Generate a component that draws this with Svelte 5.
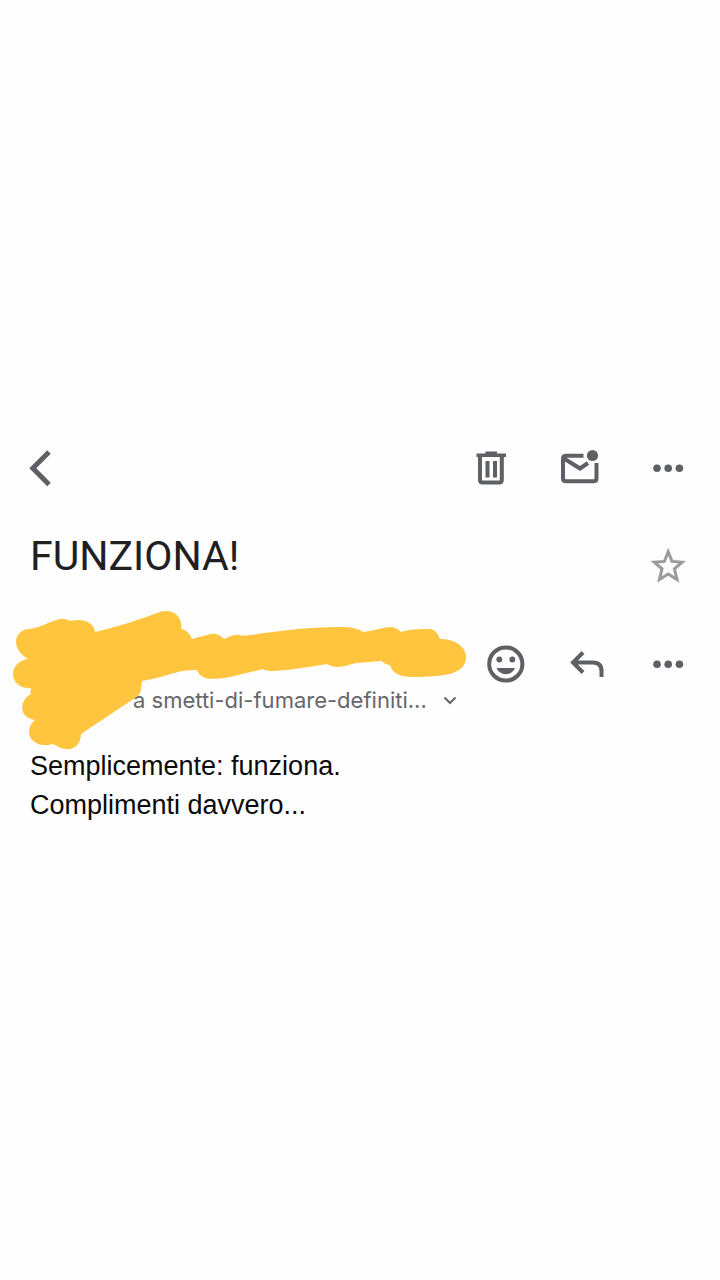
<script>
    let starred = $state(false);

    const subject = 'FUNZIONA!';
    const recipient = 'a smetti-di-fumare-definiti...';
    const lines = ['Semplicemente: funziona.', 'Complimenti davvero...'];
</script>

{#snippet dots()}
    <svg viewBox="0 0 48 48" aria-hidden="true">
        <circle cx="13" cy="24.2" r="3.8" />
        <circle cx="24.2" cy="24.2" r="3.8" />
        <circle cx="35.4" cy="24.2" r="3.8" />
    </svg>
{/snippet}

<main>
    <header class="toolbar">
        <button class="back" aria-label="Indietro">
            <svg viewBox="0 0 24 48" aria-hidden="true">
                <path class="line thick" d="M21 8 L4.800 24.300 L21 40.600" />
            </svg>
        </button>
        <div class="tools">
            <button aria-label="Elimina">
                <svg viewBox="0 0 48 48" aria-hidden="true">
                    <path class="line" d="M12 11 V36 Q12 38.600 14.800 38.600 H31 Q33.800 38.600 33.800 36 V11" />
                    <path d="M8.500 9.500 H17.500 V7.500 H29 V9.500 H38 V13 H8.500 Z" />
                    <path class="line" d="M19.500 17 V33.500 M27 17 V33.500" />
                </svg>
            </button>
            <button aria-label="Segna come da leggere">
                <svg viewBox="0 0 48 48" aria-hidden="true">
                    <path class="line" d="M27.500 11.800 H10 Q7 11.800 7 14.800 V34.500 Q7 37.200 10 37.200 H37.500 Q40.500 37.200 40.500 34.500 V19" />
                    <path class="line" d="M8 14.500 L24 24.500 L32 19" />
                    <circle cx="36.500" cy="11.500" r="5.600" />
                </svg>
            </button>
            <button aria-label="Altre opzioni">{@render dots()}</button>
        </div>
    </header>

    <div class="subject">
        <h1>{subject}</h1>
        <button aria-label="Aggiungi a Speciali" aria-pressed={starred} onclick={() => (starred = !starred)}>
            <svg class="star" class:starred viewBox="0 0 48 48" aria-hidden="true">
                <path d="M24.200 9.800 L28 19.400 L38.200 20.200 L30.400 26.800 L33 37.600 L24.200 32 L15.400 37.600 L18 26.800 L10.200 20.200 L20.400 19.400 Z" />
            </svg>
        </button>
    </div>

    <section class="sender">
        <div class="actions">
            <button aria-label="Aggiungi reazione">
                <svg viewBox="0 0 48 48" aria-hidden="true">
                    <circle class="line" cx="23.800" cy="24" r="16.600" />
                    <circle cx="17.300" cy="19.500" r="2.900" />
                    <circle cx="30.300" cy="19.500" r="2.900" />
                    <path d="M14.600 28 H33 C31.300 32 27.800 34.200 23.800 34.200 S16.300 32 14.600 28 Z" />
                </svg>
            </button>
            <button aria-label="Rispondi">
                <svg viewBox="0 0 48 48" aria-hidden="true">
                    <path class="line" d="M20 12.500 L10 22.500 L20 32.500 M10.500 22.500 H30 Q38.500 22.500 38.500 31 V37" />
                </svg>
            </button>
            <button aria-label="Altre opzioni del messaggio">{@render dots()}</button>
        </div>
        <button class="recipient">
            {recipient}
            <svg viewBox="0 0 16 16" aria-hidden="true">
                <path class="line thin" d="M2.500 5.500 L8 11 L13.500 5.500" />
            </svg>
        </button>
        <svg class="scribble" viewBox="13 610 453 140" aria-hidden="true">
            <path
                d="M16 642 C16 635 21 630 28 629 C37 629 48 622 60 619 C64 618 67 620 70 621
                C82 618 94 622 95 632 C116 627 139 620 160 612 C172 608 183 616 181 629
                C187 630 190 634 192 639 C199 637 206 635 211 634 C217 633 221 636 224 639
                C229 637 234 634 239 635 Q244 636 250 635 C278 631 309 627 337 627
                C347 627 356 627 363 632 C372 631 381 628 390 627 C395 627 398 629 401 632
                C410 629 420 629 430 629 C436 630 438 634 440 639 C454 639 466 646 466 657
                C466 674 445 677 412 677 C400 677 392 673 390 665 Q384 664 382 661
                C373 662 365 662 357 663 C350 664 344 667 338 667 Q331 667 327 664
                C309 667 291 670 273 671 Q266 671 263 669 C252 672 241 674 230 677
                C217 679 201 682 197 670 Q189 670 182 671 C169 674 156 679 142 681
                C141 689 142 694 135 698 L81 734 C81 746 72 750 66 749
                C60 749 57 745 52 744 C42 748 29 742 29 732 Q29 725 35 720
                C25 719 20 711 23 703 Q26 696 31 694 Q30 691 31 688
                C20 689 13 682 13 674 C13 666 20 660 28 659 C23 656 16 650 16 642 Z"
            />
        </svg>
    </section>

    <article>
        {#each lines as line}
            <p>{line}</p>
        {/each}
    </article>
</main>

<style>
    :global(body) {
        margin: 0;
        background: #fefefe;
    }

    main {
        padding-top: 444px;
        font-family: "Liberation Sans", Arial, sans-serif;
    }

    button {
        flex: none;
        width: 48px;
        height: 48px;
        padding: 0;
        border: 0;
        background: none;
        color: #5f6065;
        cursor: pointer;
    }

    svg {
        display: block;
        width: 100%;
        height: 100%;
        fill: currentColor;
    }

    .line {
        fill: none;
        stroke: currentColor;
        stroke-width: 4;
    }

    .thick {
        stroke-width: 5;
    }

    .thin {
        stroke-width: 2;
    }

    .toolbar,
    .subject {
        display: flex;
        justify-content: space-between;
        padding: 0 28px;
    }

    .back {
        width: 24px;
    }

    .tools {
        display: flex;
        gap: 40px;
    }

    .subject {
        align-items: flex-start;
        margin-top: 40px;
        padding-left: 30px;
    }

    h1 {
        margin: 0;
        color: #202022;
        font: 400 41px/48px Roboto, sans-serif;
    }

    .subject button {
        margin-top: 10px;
        color: #9a9a9f;
    }

    .star {
        fill: none;
        stroke: currentColor;
        stroke-width: 3;
    }

    .starred {
        fill: currentColor;
    }

    .sender {
        position: relative;
        margin-top: 50px;
        padding: 0 28px 0 133px;
    }

    .actions {
        display: flex;
        justify-content: flex-end;
        gap: 33px;
    }

    .recipient {
        display: flex;
        align-items: center;
        gap: 15px;
        width: auto;
        height: 24px;
        color: #66676b;
        font: 22px/24px Inter, sans-serif;
        white-space: nowrap;
    }

    .recipient svg {
        width: 16px;
        height: 16px;
    }

    /* copre mittente e avatar */
    .scribble {
        position: absolute;
        top: -30px;
        left: 13px;
        width: 453px;
        height: 140px;
        fill: #ffc53f;
        pointer-events: none;
    }

    article {
        padding: 35px 30px;
        color: #0a0a0a;
        font-size: 27px;
        line-height: 39px;
    }

    p {
        margin: 0;
    }
</style>
